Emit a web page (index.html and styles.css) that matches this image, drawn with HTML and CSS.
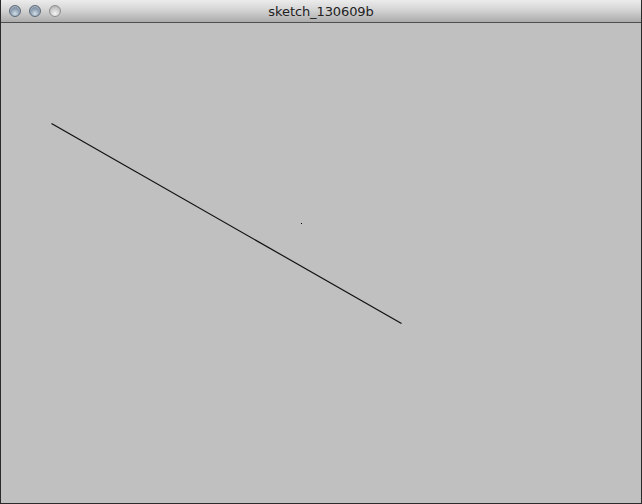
FILE: index.html
```html
<!DOCTYPE html>
<html>
<head>
<meta charset="utf-8">
<link rel="stylesheet" href="styles.css">
</head>
<body>
<div class="window">
  <div class="titlebar">
    <div class="buttons">
      <span class="btn btn-close"></span>
      <span class="btn btn-min"></span>
      <span class="btn btn-max"></span>
    </div>
    <div class="title">sketch_130609b</div>
  </div>
  <div class="canvas">
    <svg class="drawing" width="640" height="480" viewBox="0 0 640 480">
      <line x1="50.5" y1="100.5" x2="400.5" y2="300.5" stroke="#111" stroke-width="1.2"/>
      <rect x="300" y="200" width="1" height="1" fill="#000"/>
    </svg>
  </div>
</div>
</body>
</html>
```
FILE: styles.css
```css
html, body {
  margin: 0;
  padding: 0;
  background: #c0c0c0;
}
.window {
  width: 642px;
  height: 504px;
  box-sizing: border-box;
  border-left: 1px solid #2a2a2a;
  border-right: 1px solid #2a2a2a;
  border-bottom: 1px solid #2a2a2a;
  display: flex;
  flex-direction: column;
  background: #c0c0c0;
  overflow: hidden;
}
.titlebar {
  height: 22px;
  flex: 0 0 22px;
  border-bottom: 1px solid #4e4e4e;
  background: linear-gradient(to bottom, #ececec 0%, #d4d4d4 45%, #acacac 100%);
  position: relative;
  display: flex;
  align-items: center;
  justify-content: center;
}
.buttons {
  position: absolute;
  left: 8px;
  top: 5px;
  display: flex;
  gap: 8px;
}
.btn {
  width: 12px;
  height: 12px;
  border-radius: 50%;
  box-sizing: border-box;
  display: block;
}
.btn-close, .btn-min {
  border: 1px solid #5d6a78;
  background: radial-gradient(circle at 50% 75%, #d2dde8 0%, #93a4b6 45%, #5f7184 100%);
  box-shadow: inset 0 1px 1px rgba(255,255,255,0.5);
}
.btn-max {
  border: 1px solid #8e8e8e;
  background: radial-gradient(circle at 50% 75%, #f4f4f4 0%, #d2d2d2 45%, #a6a6a6 100%);
}
.title {
  font-family: "DejaVu Sans", "Liberation Sans", sans-serif;
  font-size: 13px;
  color: #222;
  letter-spacing: -0.1px;
  margin-top: 1px;
}
.canvas {
  flex: 1;
  background: #c0c0c0;
}
.drawing {
  display: block;
}
```
